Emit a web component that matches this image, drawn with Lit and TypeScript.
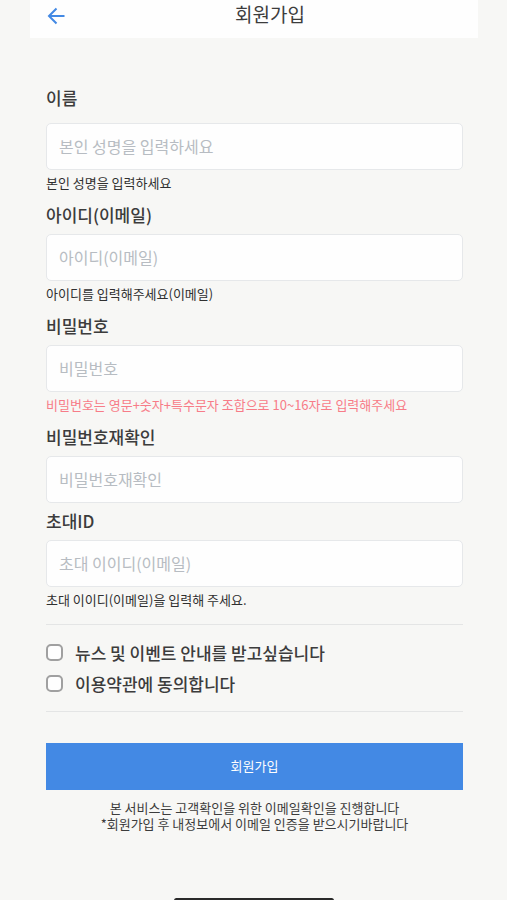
import { LitElement, html, css, nothing } from "lit";
import { customElement, property } from "lit/decorators.js";

interface Field {
  id: string;
  label: string;
  type: string;
  placeholder: string;
  hint?: string;
  error?: boolean;
}

const FIELDS: Field[] = [
  { id: "name", label: "이름", type: "text", placeholder: "본인 성명을 입력하세요", hint: "본인 성명을 입력하세요" },
  { id: "email", label: "아이디(이메일)", type: "email", placeholder: "아이디(이메일)", hint: "아이디를 입력해주세요(이메일)" },
  {
    id: "password",
    label: "비밀번호",
    type: "password",
    placeholder: "비밀번호",
    hint: "비밀번호는 영문+숫자+특수문자 조합으로 10~16자로 입력해주세요",
    error: true,
  },
  { id: "confirm", label: "비밀번호재확인", type: "password", placeholder: "비밀번호재확인" },
  { id: "invite", label: "초대ID", type: "text", placeholder: "초대 이이디(이메일)", hint: "초대 이이디(이메일)을 입력해 주세요." },
];

@customElement("form-field")
export class FormField extends LitElement {
  @property({ attribute: false }) field!: Field;

  static styles = css`
    :host {
      display: flex;
      flex-direction: column;
    }
    .label {
      padding-bottom: 2px;
      font-size: 17px;
      font-weight: 500;
      line-height: 35px;
      color: #3c3c3c;
    }
    .input {
      box-sizing: border-box;
      width: 100%;
      height: 47px;
      margin: var(--label-gap, 0) 0 0;
      padding: 0 12px 2px;
      border: 1px solid #e6e8ea;
      border-radius: 5px;
      background: #fefefe;
      color: #3c3c3c;
      font: inherit;
      font-size: 16px;
      outline: none;
    }
    .input:focus {
      border-color: #4389e4;
    }
    .input::placeholder {
      color: #b7bcc2;
      opacity: 1;
    }
    .hint {
      margin: 0;
      padding-bottom: 2px;
      font-size: 13px;
      line-height: 25px;
      color: #303030;
    }
    .error {
      color: #f77c88;
    }
  `;

  render() {
    const f = this.field;
    return html`
      <label class="label" for=${f.id}>${f.label}</label>
      <input class="input" id=${f.id} type=${f.type} placeholder=${f.placeholder} />
      ${f.hint ? html`<p class="hint ${f.error ? "error" : ""}">${f.hint}</p>` : nothing}
    `;
  }
}

@customElement("app-root")
export class AppRoot extends LitElement {
  static styles = css`
    :host {
      display: block;
      box-sizing: border-box;
      min-height: 100vh;
      padding: 0 29px 0 30px;
      background: #f7f7f5;
      font-family: "Noto Sans CJK KR", sans-serif;
      color: #3c3c3c;
    }
    .header {
      display: flex;
      align-items: flex-start;
      height: 38px;
      padding-left: 16px;
      background: #fefefe;
    }
    .back {
      display: flex;
      width: 20px;
      height: 32px;
      padding: 0;
      align-items: center;
      border: 0;
      background: none;
      cursor: pointer;
    }
    .title {
      flex: 1;
      margin: 0;
      padding-right: 4px;
      font-size: 19px;
      font-weight: 400;
      line-height: 28px;
      text-align: center;
    }
    .form {
      padding: 42px 15px 68px 16px;
    }
    .first {
      --label-gap: 6px;
    }
    .checks {
      margin: 10px 0 31px;
      padding: 12px 0;
      border: solid #e4e5e5;
      border-width: 1px 0;
    }
    .check {
      display: flex;
      align-items: center;
      gap: 12px;
      font-size: 17px;
      font-weight: 500;
      line-height: 31px;
    }
    .box {
      appearance: none;
      display: grid;
      place-content: center;
      flex: none;
      box-sizing: border-box;
      width: 17px;
      height: 17px;
      margin: 0;
      border: 2px solid #a0a0a0;
      border-radius: 5px;
      background: #fefefe;
    }
    .box:checked {
      border-color: #4389e4;
      background: #4389e4;
    }
    .submit {
      display: block;
      width: 100%;
      height: 47px;
      padding: 0 0 2px;
      border: 0;
      background: #4389e4;
      color: #fefefe;
      font: inherit;
      font-size: 13px;
      cursor: pointer;
    }
    .note {
      margin: 10px 0 0;
      font-size: 13px;
      line-height: 16px;
      text-align: center;
    }
    .home {
      position: fixed;
      bottom: -3px;
      left: 50%;
      width: 160px;
      height: 5px;
      border-radius: 3px;
      background: #2a2a2a;
      transform: translateX(-50%);
    }
  `;

  render() {
    return html`
      <header class="header">
        <button class="back" type="button" aria-label="뒤로">
          <svg width="20" height="20" viewBox="0 0 20 20" fill="none" stroke="#4389e4" stroke-width="2">
            <path d="M18.5 10H3M10.5 2.5L3 10L10.5 17.5" />
          </svg>
        </button>
        <h1 class="title">회원가입</h1>
      </header>
      <form class="form" @submit=${(e: Event) => e.preventDefault()}>
        ${FIELDS.map((f, i) => html`<form-field class=${i === 0 ? "first" : ""} .field=${f}></form-field>`)}
        <div class="checks">
          <label class="check"><input class="box" type="checkbox" name="news" />뉴스 및 이벤트 안내를 받고싶습니다</label>
          <label class="check"><input class="box" type="checkbox" name="terms" />이용약관에 동의합니다</label>
        </div>
        <button class="submit" type="submit">회원가입</button>
        <p class="note">본 서비스는 고객확인을 위한 이메일확인을 진행합니다<br />*회원가입 후 내정보에서 이메일 인증을 받으시기바랍니다</p>
      </form>
      <div class="home"></div>
    `;
  }
}
